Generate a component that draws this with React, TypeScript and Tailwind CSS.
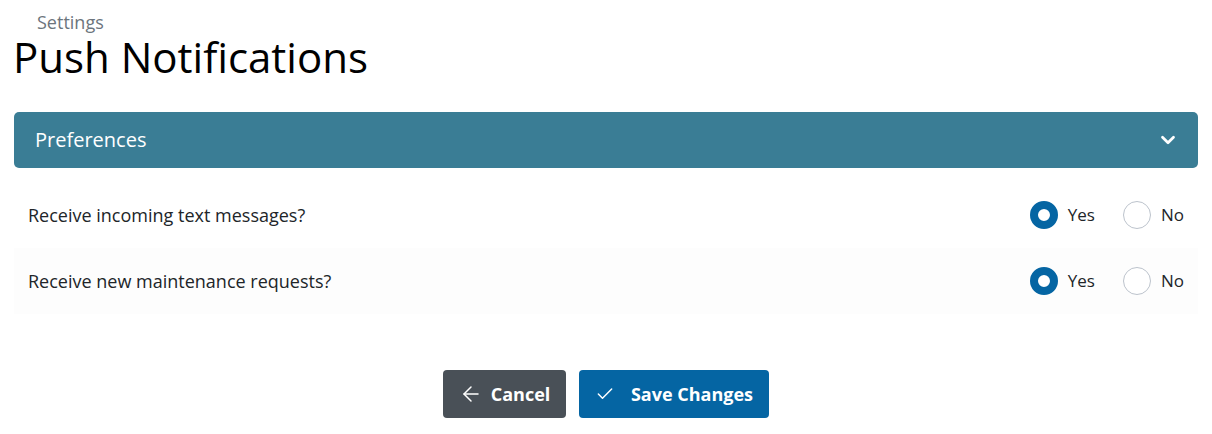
import { ArrowLeft, Check, ChevronDown } from 'lucide-react';

const font = { fontFamily: '"Open Sans", "Noto Sans", sans-serif' };

function Radio({ checked, label }: { checked: boolean; label: string }) {
  return (
    <label className="flex items-center gap-[10px] cursor-pointer">
      {checked ? (
        <span className="w-[28px] h-[28px] rounded-full border-[8px] border-[#0565a3] bg-white" />
      ) : (
        <span className="w-[28px] h-[28px] rounded-full border border-[#bcc3cc] bg-white" />
      )}
      <span className="text-[17px] text-[#212529]">{label}</span>
    </label>
  );
}

function Row({ question, shade }: { question: string; shade: string }) {
  return (
    <div className={`flex items-center justify-between h-[66px] pl-[14px] pr-[14px] ${shade}`}>
      <span className="text-[18px] text-[#212529]">{question}</span>
      <div className="flex items-center gap-[28px]">
        <Radio checked label="Yes" />
        <Radio checked={false} label="No" />
      </div>
    </div>
  );
}

export default function App() {
  return (
    <div className="w-[1212px] h-[434px] bg-white px-[14px] pt-[10px]" style={font}>
      <p className="pl-[23px] text-[18px] leading-[25px] text-[#6c757d]">Settings</p>
      <h1 className="-mt-[3px] text-[42px] leading-[50px] text-black -ml-[1px]">Push Notifications</h1>

      <div className="mt-[30px] rounded-[5px] bg-[#3a7d95] h-[56px] flex items-center justify-between pl-[21px] pr-[19px]">
        <span className="text-[20px] text-white">Preferences</span>
        <ChevronDown size={22} strokeWidth={3} className="text-white" />
      </div>

      <div className="mt-[14px]">
        <Row question="Receive incoming text messages?" shade="bg-white" />
        <Row question="Receive new maintenance requests?" shade="bg-[#fdfdfd]" />
      </div>

      <div className="mt-[56px] flex justify-center gap-[13px]">
        <button className="h-[48px] w-[123px] rounded-[4px] bg-[#495057] text-white font-bold text-[18px] flex items-center justify-center gap-[8px]">
          <ArrowLeft size={24} strokeWidth={1.5} />
          Cancel
        </button>
        <button className="h-[48px] w-[190px] rounded-[4px] bg-[#0565a3] text-white font-bold text-[18px] flex items-center justify-center gap-[16px]">
          <Check size={20} strokeWidth={1.75} />
          Save Changes
        </button>
      </div>
    </div>
  );
}
